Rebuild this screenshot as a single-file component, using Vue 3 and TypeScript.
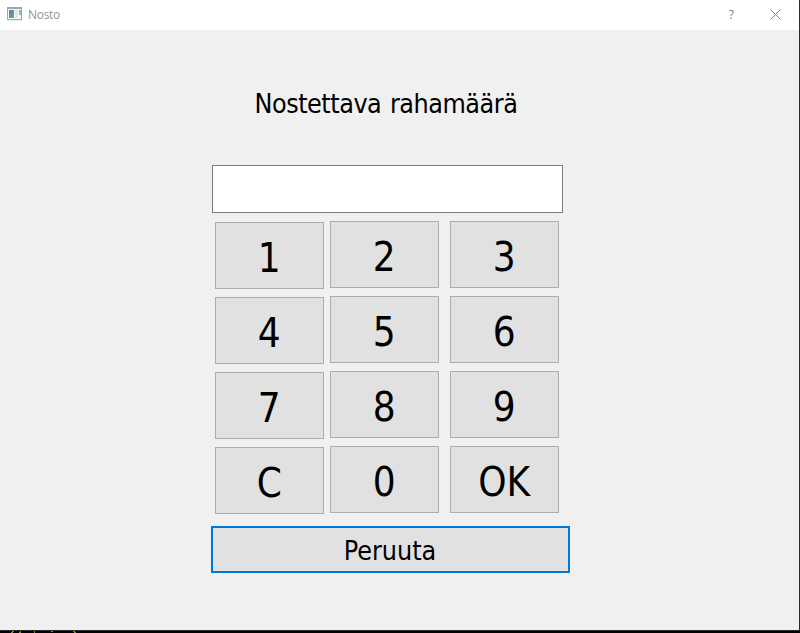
<script setup lang="ts">
import { ref } from 'vue'

const amount = ref<string>('')
const columns: string[][] = [
  ['1', '4', '7', 'C'],
  ['2', '5', '8', '0'],
  ['3', '6', '9', 'OK'],
]

function press(key: string): void {
  if (key === 'C') amount.value = ''
  else if (key !== 'OK') amount.value += key
}
</script>

<template>
  <div class="screen">
    <div class="window">
      <header class="titlebar">
        <svg class="app-icon" width="16" height="14" viewBox="0 0 16 14">
          <defs>
            <linearGradient id="pane" x1="0" y1="0" x2="0.4" y2="1">
              <stop offset="0" stop-color="#5886ad" />
              <stop offset="1" stop-color="#55a583" />
            </linearGradient>
          </defs>
          <rect x="0.5" y="0.5" width="14" height="12" fill="#f7f7f7" stroke="#a2a5aa" />
          <path d="M0 1h15" stroke="#a2a5aa" stroke-width="2" />
          <path d="M0 13.2h15" stroke="#c4c6c9" stroke-width="0.6" />
          <rect x="2" y="3" width="5" height="8" fill="url(#pane)" />
          <rect x="8" y="3" width="3" height="8" fill="#e4e5e7" />
          <rect x="12" y="3" width="2" height="5" fill="url(#pane)" opacity="0.65" />
        </svg>
        <span class="title">Nosto</span>
        <span class="help">?</span>
        <svg class="close" width="11" height="11" viewBox="0 0 11 11">
          <path d="M0.5 0.5l10 10M10.5 0.5l-10 10" stroke="#808080" stroke-width="1" />
        </svg>
      </header>
      <main class="content">
        <h1 class="heading">Nostettava rahamäärä</h1>
        <input v-model="amount" class="amount" type="text" />
        <div class="keypad">
          <div v-for="(keys, i) in columns" :key="i" class="column">
            <button v-for="k in keys" :key="k" class="key" @click="press(k)">{{ k }}</button>
          </div>
        </div>
        <button class="cancel">Peruuta</button>
      </main>
    </div>
    <svg class="backdrop" width="800" height="2" viewBox="0 0 800 2">
      <path d="M12 0.5h2M11 1.5h2M20 0.5h1M19 1.5h2M34 0.5h1M34 1.5h1M73 0.5h2M74 1.5h2" stroke="#8c8c25" />
      <path d="M51 0.5h1" stroke="#b85c38" />
      <path d="M52 0.5h1" stroke="#6fb8b8" />
    </svg>
  </div>
</template>

<style>
body {
  margin: 0;
  overflow: hidden;
  background: #000;
}
</style>

<style scoped>
.screen {
  width: 800px;
  height: 633px;
  background: #000;
}
.window {
  box-sizing: border-box;
  width: 800px;
  height: 631px;
  border-right: 1px solid #2b2b2b;
  border-bottom: 1px solid #2b2b2b;
  background: #f0f0f0;
}
.titlebar {
  display: flex;
  align-items: center;
  box-sizing: border-box;
  height: 30px;
  padding: 0 18px 2px 7px;
  background: #fff;
  font: 12px/28px "Open Sans", "Noto Sans", sans-serif;
  color: #949494;
}
.title {
  margin-left: 5px;
  padding-top: 1px;
  letter-spacing: -0.3px;
}
.help {
  margin-left: auto;
  margin-right: 36px;
  padding-top: 1px;
  color: #808080;
}
.content {
  display: flex;
  flex-direction: column;
  align-items: flex-start;
  padding: 56px 0 0 211px;
  font-family: "DejaVu Sans Condensed", "DejaVu Sans", sans-serif;
  font-stretch: condensed;
  color: #000;
}
.heading {
  margin: 0 0 0 43.5px;
  height: 36px;
  font-size: 26.67px;
  line-height: 36px;
  font-weight: 400;
  letter-spacing: -0.48px;
  word-spacing: 1.5px;
  white-space: nowrap;
}
.amount {
  box-sizing: border-box;
  width: 351px;
  height: 48px;
  margin: 43px 0 0 1px;
  padding: 0 8px;
  border: 1px solid #7a7a7a;
  border-radius: 0;
  outline: none;
  background: #fff;
  font: inherit;
  font-size: 27px;
}
.keypad {
  display: flex;
  margin: 8px 0 0 4px;
}
.column {
  display: flex;
  flex-direction: column;
  gap: 8px;
}
.column:first-child {
  margin-top: 1px;
  margin-right: 6px;
}
.column:last-child {
  margin-left: 11px;
}
.key {
  box-sizing: border-box;
  width: 109px;
  height: 67px;
  padding: 4px 0.6px 0 0;
  border: 1px solid #adadad;
  border-radius: 0;
  background: #e1e1e1;
  color: #000;
  font: inherit;
  font-size: 40px;
  line-height: 60px;
}
.cancel {
  box-sizing: border-box;
  width: 359px;
  height: 47px;
  margin-top: 12px;
  padding: 2px 1px 0 0;
  border: 2px solid #0078d7;
  border-radius: 0;
  background: #e1e1e1;
  color: #000;
  font: inherit;
  font-size: 26.67px;
  line-height: 40px;
}
.backdrop {
  display: block;
}
</style>
